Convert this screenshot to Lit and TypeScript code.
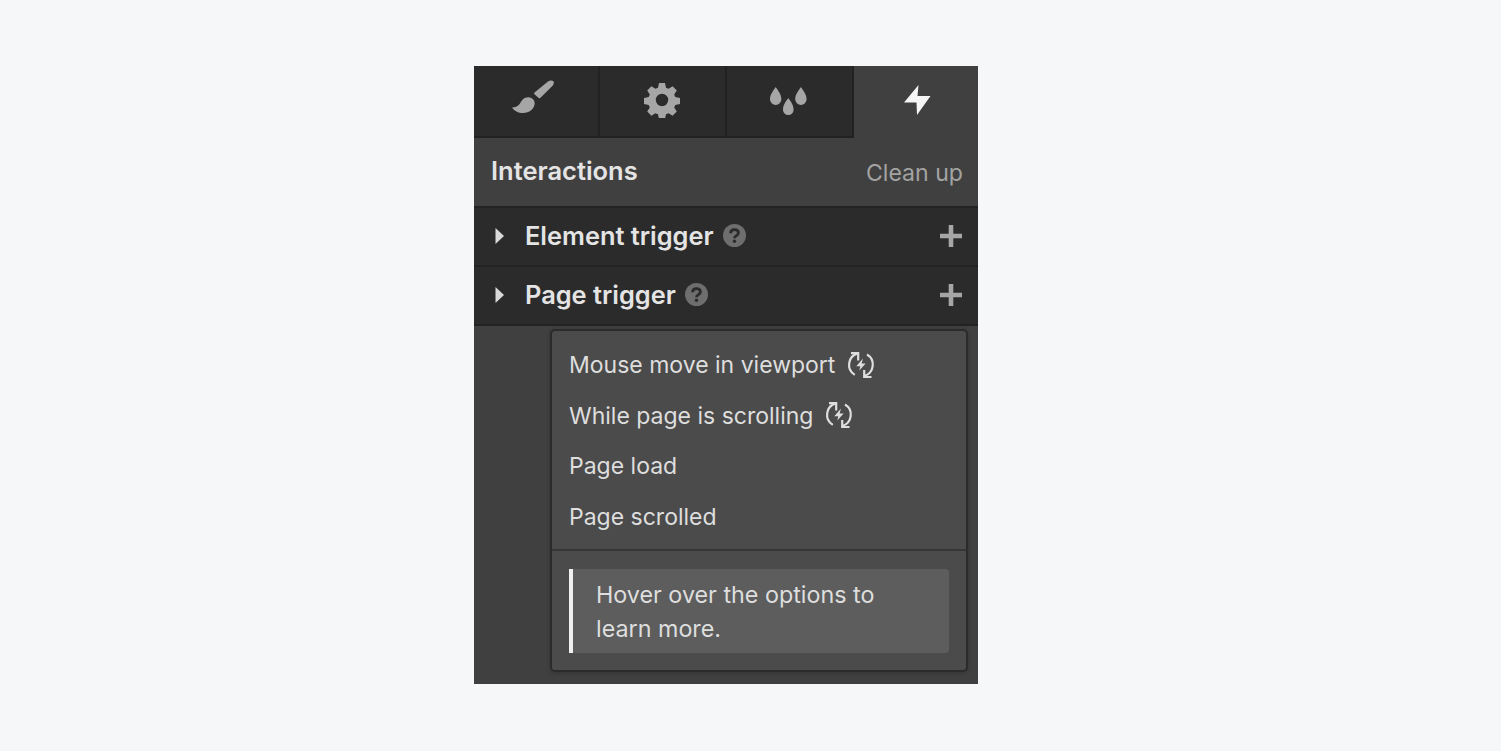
import { LitElement, css, html, svg } from "lit";
import { customElement } from "lit/decorators.js";

const brush = svg`<svg class="brush" width="42" height="34" viewBox="0 0 42 34"><path fill="currentColor" d="M22.500 12.500 36 1.500c1.700-1.300 4.400-1.500 5.400-.2.900 1.300.4 3-.8 4.500L28.500 17.800c-.6.600-1.200.6-1.800.1l-4.200-3.700c-.6-.5-.6-1.200 0-1.700z"/><path fill="currentColor" d="M0 27.500c4.600.2 7-2 9-5.700 2-3.600 5.600-4.900 8.800-4.300 3.300.6 5.300 3.500 4.800 6.800-.9 5-5.300 8.700-11.400 8.700-5 0-9-2-11.200-5.500z"/></svg>`;

const gear = svg`<svg width="36" height="36" viewBox="0 0 36 36"><path fill="currentColor" fill-rule="evenodd" d="M15 1h6l1 4.700 2.600 1.100 4-2.600 4.200 4.200-2.600 4 1.100 2.600 4.700 1v6l-4.700 1-1.100 2.600 2.600 4-4.200 4.200-4-2.600-2.600 1.100-1 4.700h-6l-1-4.700-2.600-1.100-4 2.600-4.200-4.200 2.600-4-1.100-2.600-4.700-1v-6l4.700-1 1.100-2.600-2.600-4 4.200-4.200 4 2.600L14 5.700zM18 11.800a6.200 6.200 0 1 0 0 12.400 6.200 6.200 0 0 0 0-12.400z"/></svg>`;

const drops = svg`<svg class="drops" width="37" height="28" viewBox="0 0 37 28"><path fill="currentColor" d="M5.700 0c2 3.300 5.700 7 5.700 12.300a5.700 5.700 0 0 1-11.400 0C0 7 3.700 3.300 5.700 0zM30.900 0c2 3.300 5.700 7 5.700 12.300a5.700 5.700 0 0 1-11.400 0c0-5.300 3.700-9 5.700-12.300zM18.300 11c1.900 3 5.300 6.300 5.300 11.700a5.300 5.300 0 0 1-10.600 0c0-5.400 3.400-8.700 5.300-11.700z"/></svg>`;

const bolt = svg`<svg width="27" height="30" viewBox="0 0 27 30"><path fill="currentColor" d="M14.500 0 0 17.500h12.500L13 30 26.500 11H13.500z"/></svg>`;

const caret = svg`<svg width="9" height="16" viewBox="0 0 9 16"><path fill="currentColor" d="M0.500 0v16L9 8z"/></svg>`;

const plus = svg`<svg width="22" height="22" viewBox="0 0 22 22"><path fill="currentColor" d="M8.700 0h4.600v8.700H22v4.600h-8.700V22H8.700v-8.700H0V8.700h8.700z"/></svg>`;

const help = svg`<svg width="23" height="23" viewBox="0 0 23 23"><circle cx="11.500" cy="11.500" r="11.500" fill="#6e6e6e"/><path fill="none" stroke="#2b2b2b" stroke-width="2.800" d="M7.600 9.200c0-2.300 1.700-3.500 3.900-3.500 2.300 0 3.900 1.300 3.900 3.200 0 2.800-3.900 2.600-3.900 5.400"/><circle cx="11.500" cy="17.300" r="1.700" fill="#2b2b2b"/></svg>`;

const cycleBolt = svg`<svg width="27" height="27" viewBox="0 0 27 27"><g fill="none" stroke="currentColor" stroke-width="2.200"><path d="M6.800 22.900A11.800 11.800 0 0 1 9.800 1.400"/><path d="M3 1.200h7.200V8.500"/><path d="M19 2.500A11.800 11.800 0 0 1 16.200 24"/><path d="M23.500 25H16.200V18"/></g><path fill="currentColor" d="M15 6.500 8.300 14.200h4l-1 4.300 6.300-7h-4z"/></svg>`;

@customElement("app-root")
export class AppRoot extends LitElement {
  static styles = css`
    :host {
      display: block;
      height: 751px;
      padding: 66px 0 0 474px;
      box-sizing: border-box;
      background: #f6f7f9;
      font-family: Inter, "Liberation Sans", sans-serif;
      overflow: hidden;
    }
    .panel {
      width: 504px;
      height: 618px;
      background: #404040;
      display: flex;
      flex-direction: column;
    }
    .tabs {
      display: flex;
      height: 72px;
      flex: none;
    }
    .tab {
      box-sizing: border-box;
      width: 127px;
      display: flex;
      align-items: center;
      justify-content: center;
      color: #a6a6a6;
      background: #2b2b2b;
      border-right: 2px solid #222;
      border-bottom: 2px solid #222;
      padding: 0 2px 2px 0;
    }
    .tab:first-child {
      width: 126px;
      padding-right: 6px;
    }
    .brush {
      margin-bottom: 6px;
    }
    .drops {
      margin-top: 2px;
    }
    .tab.active {
      flex: 1;
      width: auto;
      color: #f5f5f5;
      background: transparent;
      border: none;
      padding: 0 0 4px 2px;
    }
    .head {
      height: 68px;
      flex: none;
      display: flex;
      align-items: center;
      justify-content: space-between;
      padding: 0 15px 0 17px;
    }
    .title {
      font-size: 25.5px;
      font-weight: 600;
      color: #e4e4e4;
      margin-bottom: 3px;
    }
    .clean {
      font-size: 23.1px;
      color: #a3a3a3;
      margin-top: 2px;
    }
    .row {
      height: 59px;
      flex: none;
      box-sizing: border-box;
      display: flex;
      align-items: center;
      background: #2b2b2b;
      border-top: 2px solid #232323;
      padding: 0 16px 2px 21px;
      color: #e4e4e4;
    }
    .row .caret {
      display: flex;
      width: 30px;
      color: #d9d9d9;
    }
    .row .name {
      font-size: 25.4px;
      font-weight: 600;
      margin-right: 9px;
    }
    .row .q {
      display: flex;
    }
    .row .add {
      display: flex;
      margin-left: auto;
      color: #a6a6a6;
    }
    .menu-wrap {
      border-top: 2px solid #232323;
      padding: 3px 10px 0 76px;
    }
    .menu {
      box-sizing: border-box;
      height: 343px;
      background: #4b4b4b;
      border: 2px solid #2b2b2b;
      border-radius: 5px;
      box-shadow: 0 1px 4px rgba(0, 0, 0, 0.2);
      display: flex;
      flex-direction: column;
    }
    .items {
      box-sizing: border-box;
      height: 220px;
      flex: none;
      padding-top: 9px;
      border-bottom: 2px solid #363636;
    }
    .item {
      height: 50.5px;
      display: flex;
      align-items: center;
      gap: 13px;
      padding-left: 17px;
      font-size: 23px;
      color: #dedede;
    }
    .item svg {
      display: block;
      color: #dedede;
      overflow: visible;
    }
    .note-wrap {
      padding: 18px 17px 0;
    }
    .note {
      box-sizing: border-box;
      height: 84px;
      background: #5d5d5d;
      border-left: 4px solid #f0f0f0;
      border-radius: 0 4px 4px 0;
      padding: 9px 40px 0 23px;
      font-size: 23.3px;
      line-height: 34px;
      color: #dedede;
    }
  `;

  private renderRow(name: string) {
    return html`<div class="row">
      <span class="caret">${caret}</span>
      <span class="name">${name}</span>
      <span class="q">${help}</span>
      <span class="add">${plus}</span>
    </div>`;
  }

  render() {
    return html`<div class="panel">
      <div class="tabs">
        <div class="tab">${brush}</div>
        <div class="tab">${gear}</div>
        <div class="tab">${drops}</div>
        <div class="tab active">${bolt}</div>
      </div>
      <div class="head">
        <span class="title">Interactions</span>
        <span class="clean">Clean up</span>
      </div>
      ${this.renderRow("Element trigger")} ${this.renderRow("Page trigger")}
      <div class="menu-wrap">
        <div class="menu">
          <div class="items">
            <div class="item">Mouse move in viewport ${cycleBolt}</div>
            <div class="item">While page is scrolling ${cycleBolt}</div>
            <div class="item">Page load</div>
            <div class="item">Page scrolled</div>
          </div>
          <div class="note-wrap">
            <div class="note">Hover over the options to learn more.</div>
          </div>
        </div>
      </div>
    </div>`;
  }
}
